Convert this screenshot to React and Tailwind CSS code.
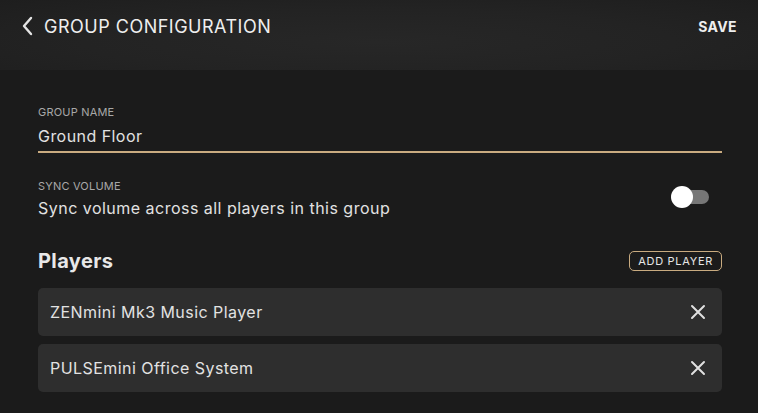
import React, { useState } from 'react';

const PLAYERS = [
  { id: 1, name: 'ZENmini Mk3 Music Player' },
  { id: 2, name: 'PULSEmini Office System' },
];

function ChevronLeft() {
  return (
    <svg width="14" height="20" viewBox="0 0 14 20" fill="none" stroke="#e5e5e5" strokeWidth="2.4" strokeLinecap="round" strokeLinejoin="round">
      <path d="M10 2 L3 10 L10 18" />
    </svg>
  );
}

function CloseIcon() {
  return (
    <svg width="16" height="16" viewBox="0 0 16 16" fill="none" stroke="#e0e0e0" strokeWidth="2" strokeLinecap="round">
      <path d="M2 2 L14 14 M14 2 L2 14" />
    </svg>
  );
}

export default function App() {
  const [sync, setSync] = useState(false);
  const [name, setName] = useState('Ground Floor');

  return (
    <div className="w-[758px] h-[413px] overflow-hidden bg-[#1b1b1b] text-[#e8e8e8]" style={{ fontFamily: 'Inter, "Open Sans", sans-serif' }}>
      {/* Header */}
      <div className="h-[70px] flex items-center justify-between pl-[21px] pr-[21px] pb-[18px] bg-[radial-gradient(ellipse_at_50%_60%,#272727_0%,#232323_55%,#1e1e1e_100%)]">
        <div className="flex items-center gap-[9px]">
          <ChevronLeft />
          <span className="text-[18px] tracking-[0.5px] text-[#eeeeee]">GROUP CONFIGURATION</span>
        </div>
        <span className="text-[14px] font-bold text-[#eeeeee] tracking-[0.4px]">SAVE</span>
      </div>

      {/* Body */}
      <div className="px-[38px] pt-[37px] flex flex-col">
        <label className="text-[11px] text-[#a8a8a8] leading-none tracking-[0.2px]">GROUP NAME</label>
        <input
          value={name}
          onChange={e => setName(e.target.value)}
          className="mr-[-2px] mt-[6px] pb-[3px] bg-transparent outline-none text-[16px] tracking-[0.45px] text-[#e2e2e2] border-b-2 border-[#c9ab80]"
        />

        <div className="mt-[28px] flex items-center justify-between">
          <div className="flex flex-col">
            <span className="text-[11px] text-[#a8a8a8] leading-none tracking-[0.2px]">SYNC VOLUME</span>
            <span className="mt-[4px] text-[16px] tracking-[0.48px] text-[#e2e2e2]">Sync volume across all players in this group</span>
          </div>
          <button onClick={() => setSync(!sync)} className="relative w-[38px] h-[22px] mr-[11px] mt-[-8px]">
            <span className="absolute left-[11px] top-[4px] w-[27px] h-[14px] rounded-full bg-[#777777]" />
            <span className="absolute left-0 top-0 w-[22px] h-[22px] rounded-full bg-white" />
          </button>
        </div>

        <div className="mt-[26px] flex items-center justify-between">
          <h2 className="text-[20px] font-bold tracking-[0.4px] text-[#e8e8e8]">Players</h2>
          <button className="mr-[-2px] h-[20px] px-[8px] rounded-[5px] border border-[#c9ab80] text-[11px] tracking-[0.7px] text-[#e6e6e6] leading-none">ADD PLAYER</button>
        </div>

        <div className="mt-[12px] mr-[-2px] flex flex-col gap-[8px]">
          {PLAYERS.map(p => (
            <div key={p.id} className="h-[48px] rounded-[5px] bg-[#2e2e2e] flex items-center justify-between pl-[12px] pr-[16px]">
              <span className="text-[16px] tracking-[0.45px] text-[#e2e2e2]">{p.name}</span>
              <CloseIcon />
            </div>
          ))}
        </div>
      </div>
    </div>
  );
}
